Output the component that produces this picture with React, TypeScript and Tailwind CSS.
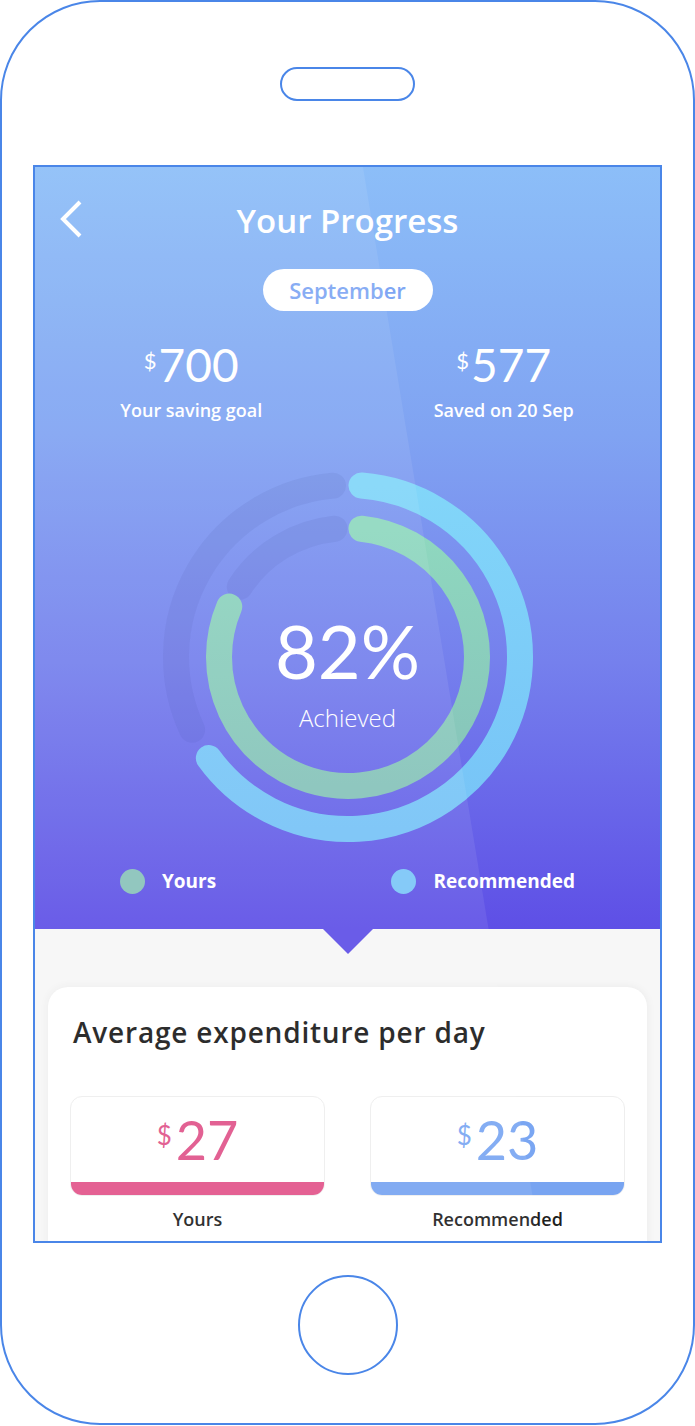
import React from 'react';

const font = { fontFamily: '"Open Sans", Lato, sans-serif' };
const numFont = { fontFamily: 'Lato, "Open Sans", sans-serif' };

// angle in degrees, clockwise from 12 o'clock
const pt = (r: number, a: number) => {
  const rad = (a * Math.PI) / 180;
  return [190 + r * Math.sin(rad), 190 - r * Math.cos(rad)];
};

const arc = (r: number, a0: number, a1: number) => {
  const [x0, y0] = pt(r, a0);
  const [x1, y1] = pt(r, a1);
  const large = a1 - a0 > 180 ? 1 : 0;
  return `M ${x0} ${y0} A ${r} ${r} 0 ${large} 1 ${x1} ${y1}`;
};

const Ring: React.FC = () => (
  <div className="relative mx-auto mt-[48px] h-[380px] w-[380px]">
    <svg width="380" height="380" viewBox="0 0 380 380">
      <defs>
        <linearGradient id="blueG" x1="0" y1="0" x2="0" y2="1">
          <stop offset="0%" stopColor="#82d6f9" />
          <stop offset="100%" stopColor="#77c3f7" />
        </linearGradient>
        <linearGradient id="greenG" x1="0" y1="0" x2="0" y2="1">
          <stop offset="0%" stopColor="#8fd8bf" />
          <stop offset="100%" stopColor="#86c3ba" />
        </linearGradient>
      </defs>
      <path d={arc(172, 245, 355)} fill="none" stroke="rgba(60,70,160,0.1)" strokeWidth="26" strokeLinecap="round" />
      <path d={arc(129, 303, 354)} fill="none" stroke="rgba(60,70,160,0.1)" strokeWidth="26" strokeLinecap="round" />
      <path d={arc(172, 4.5, 234)} fill="none" stroke="url(#blueG)" strokeWidth="26" strokeLinecap="round" />
      <path d={arc(129, 6, 293)} fill="none" stroke="url(#greenG)" strokeWidth="26" strokeLinecap="round" />
    </svg>
    <div className="absolute inset-0 flex flex-col items-center pt-[147px] text-white">
      <div style={numFont} className="text-[74px] leading-none font-normal">82%</div>
      <div className="mt-[18px] text-[24px] leading-none font-light">Achieved</div>
    </div>
  </div>
);

const Stat: React.FC<{ value: string; label: string }> = ({ value, label }) => (
  <div className="flex flex-col items-center text-white">
    <div style={numFont} className="flex items-start">
      <span className="mt-[8px] mr-[2px] text-[22px] leading-none">$</span>
      <span className="text-[46px] leading-none">{value}</span>
    </div>
    <div className="mt-[13px] text-[18px] leading-none font-semibold">{label}</div>
  </div>
);

const Spend: React.FC<{ value: string; label: string; color: string; bar: string }> = ({ value, label, color, bar }) => (
  <div className="flex w-[255px] flex-col items-center">
    <div className="flex h-[100px] w-full flex-col overflow-hidden rounded-[12px] border border-[#eeeeee] bg-white">
      <div style={numFont} className={`flex flex-1 items-center justify-center ${color}`}>
        <span className="mt-[-10px] mr-[4px] text-[26px] leading-none">$</span>
        <span className="text-[54px] leading-none">{value}</span>
      </div>
      <div className={`h-[13px] w-full ${bar}`} />
    </div>
    <div className="mt-[14px] text-[18px] leading-none font-semibold text-[#1f1f1f]">{label}</div>
  </div>
);

const App: React.FC = () => {
  return (
    <div style={font} className="h-[1426px] w-[695px] bg-white">
      <div className="flex h-[1425px] w-[695px] flex-col items-center rounded-[100px] border-2 border-[#4a86e8] bg-white">
        <div className="mt-[65px] h-[34px] w-[135px] rounded-full border-2 border-[#4a86e8]" />

        <div className="relative mt-[64px] h-[1078px] w-[629px] overflow-hidden border-2 border-[#4a86e8]">
          <div className="flex h-full flex-col">
            <div className="relative h-[762px] shrink-0 bg-[linear-gradient(180deg,#8cbef8_0%,#80a3f2_35%,#7580ed_65%,#5e4fe6_100%)]">
              <div className="relative mt-[25px] flex h-[56px] items-center justify-center">
                <svg className="absolute top-[8px] left-[24px]" width="24" height="38" viewBox="0 0 24 38">
                  <polyline points="21,2 4,19 21,36" fill="none" stroke="white" strokeWidth="4" />
                </svg>
                <h1 className="text-[33px] leading-none font-semibold text-white">Your Progress</h1>
              </div>

              <div className="mt-[21px] flex justify-center">
                <div className="flex h-[42px] w-[170px] items-center justify-center rounded-full bg-white text-[22px] font-semibold text-[#7ea6f4]">
                  September
                </div>
              </div>

              <div className="mt-[31px] grid grid-cols-2">
                <Stat value="700" label="Your saving goal" />
                <Stat value="577" label="Saved on 20 Sep" />
              </div>

              <Ring />

              <div className="mt-[20px] flex items-center justify-between px-[85px]">
                <div className="flex items-center">
                  <span className="h-[25px] w-[25px] rounded-full bg-[#89c3ba]" />
                  <span className="ml-[17px] text-[19px] font-bold text-white">Yours</span>
                </div>
                <div className="flex items-center">
                  <span className="h-[25px] w-[25px] rounded-full bg-[#7bc6f8]" />
                  <span className="ml-[17px] text-[19px] font-bold text-white">Recommended</span>
                </div>
              </div>
            </div>

            <div className="relative flex-1 bg-[#f7f7f7] px-[13px] pt-[58px]">
              <div className="absolute top-0 left-1/2 h-0 w-0 -translate-x-1/2 border-t-[25px] border-r-[25px] border-l-[25px] border-t-[#5e4fe6] border-r-transparent border-l-transparent" />
              <div className="h-[400px] rounded-[20px] bg-white px-[22px] pt-[31px] shadow-[0_0_10px_rgba(0,0,0,0.06)]">
                <h2 className="pl-[3px] text-[28px] leading-none font-semibold tracking-[0.8px] text-[#1b1b1b]">Average expenditure per day</h2>
                <div className="mt-[50px] flex justify-between">
                  <Spend value="27" label="Yours" color="text-[#e0548a]" bar="bg-[#e2548a]" />
                  <Spend value="23" label="Recommended" color="text-[#7aa6f2]" bar="bg-[#78a4f1]" />
                </div>
              </div>
            </div>
          </div>

          <div className="pointer-events-none absolute inset-0 bg-white/[0.08] [clip-path:polygon(0_0,328px_0,505px_100%,0_100%)]" />
        </div>

        <div className="mt-[32px] h-[100px] w-[100px] rounded-full border-2 border-[#4a86e8]" />
      </div>
    </div>
  );
};

export default App;
